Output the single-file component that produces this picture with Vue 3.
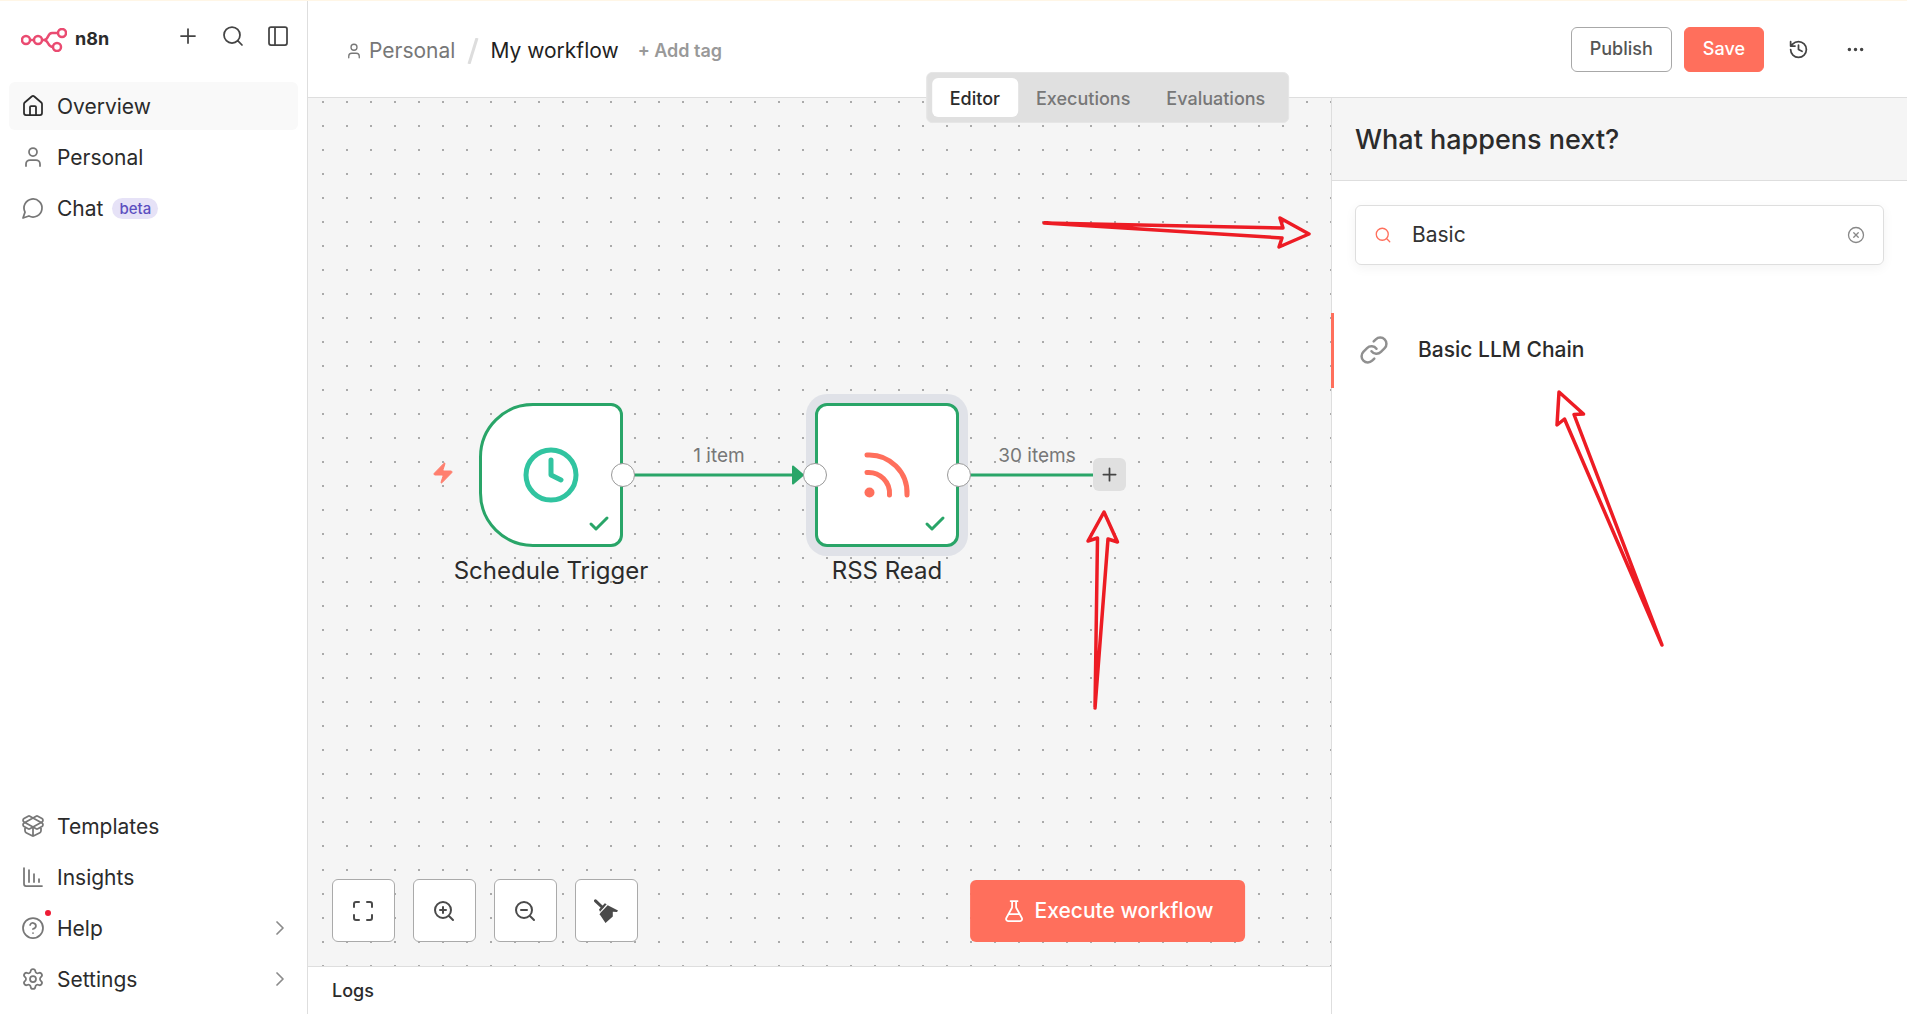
<template>
  <div class="app">
    <aside class="sidebar">
      <div class="brand-row">
        <a class="brand" href="#">
          <svg class="brand-logo" viewBox="0 0 46 24" aria-hidden="true">
            <circle cx="5" cy="12" r="4" />
            <circle cx="17" cy="12" r="4" />
            <circle cx="41" cy="5" r="4" />
            <circle cx="36" cy="19" r="4" />
            <path d="M9 12h4M21 12h2c5 0 3-7 8-7h6M23 12c5 0 3 7 9 7" />
          </svg>
          <span class="brand-name">n8n</span>
        </a>
        <div class="brand-actions">
          <button type="button" class="icon-btn" aria-label="Add"><AppIcon name="plus" /></button>
          <button type="button" class="icon-btn" aria-label="Search"><AppIcon name="search" /></button>
          <button type="button" class="icon-btn" aria-label="Toggle sidebar"><AppIcon name="panel" /></button>
        </div>
      </div>
      <nav class="menu">
        <a v-for="item in topMenu" :key="item.label" href="#" class="menu-item" :class="{ active: item.active }">
          <AppIcon :name="item.icon" class="menu-icon" />
          <span class="menu-label">{{ item.label }}</span>
          <span v-if="item.tag" class="menu-tag">{{ item.tag }}</span>
        </a>
      </nav>
      <nav class="menu menu-bottom">
        <a v-for="item in bottomMenu" :key="item.label" href="#" class="menu-item">
          <AppIcon :name="item.icon" class="menu-icon" />
          <i v-if="item.dot" class="menu-dot"></i>
          <span class="menu-label">{{ item.label }}</span>
          <AppIcon v-if="item.children" name="chevron" class="menu-arrow" />
        </a>
      </nav>
    </aside>

    <main class="main">
      <header class="header">
        <div class="crumbs">
          <a class="crumb" href="#"><AppIcon name="user" class="crumb-icon" />Personal</a>
          <svg class="crumb-slash" viewBox="0 0 12 26" aria-hidden="true"><path d="M10 0L2 26" /></svg>
          <span class="wf-name">My workflow</span>
          <button type="button" class="add-tag">+ Add tag</button>
        </div>
        <div class="header-actions">
          <button type="button" class="btn btn-outline">Publish</button>
          <button type="button" class="btn btn-primary">Save</button>
          <button type="button" class="icon-btn header-icon" aria-label="History"><AppIcon name="history" /></button>
          <button type="button" class="icon-btn header-icon" aria-label="More"><AppIcon name="more" /></button>
        </div>
      </header>

      <div class="tabs">
        <button v-for="tab in tabs" :key="tab" type="button" class="tab" :class="{ active: tab === activeTab }" @click="activeTab = tab">{{ tab }}</button>
      </div>

      <div class="body">
        <section class="workspace">
          <div class="canvas">
            <svg class="edges" aria-hidden="true">
              <path class="edge" d="M326 377H486" />
              <path class="edge" d="M662 377H786" />
              <path class="edge-head" d="M485 368.500L495 377L485 385.500Z" />
            </svg>
            <svg class="bolt" viewBox="0 0 24 24" aria-hidden="true"><path :d="icons.zap" /></svg>
            <div v-for="node in nodes" :key="node.name" class="node" :class="node.type" :style="{ left: node.x + 'px', top: node.y + 'px' }">
              <svg v-if="node.type === 'trigger'" class="node-icon clock" viewBox="0 0 60 60">
                <circle cx="30" cy="30" r="25" />
                <path d="M30 15v15l10 5" />
              </svg>
              <svg v-else class="node-icon rss" viewBox="0 0 60 60">
                <path d="M10 10a38 38 0 0 1 40 40M10 27.500a21 21 0 0 1 22.500 22.500" />
                <circle cx="12.500" cy="47.500" r="5" />
              </svg>
              <AppIcon name="check" class="node-check" />
              <i v-if="node.type === 'action'" class="handle handle-in"></i>
              <i class="handle handle-out"></i>
              <div class="node-name">{{ node.name }}</div>
            </div>
            <span v-for="label in edgeLabels" :key="label.text" class="edge-label" :style="{ left: label.x + 'px', top: label.y + 'px' }">{{ label.text }}</span>
            <button type="button" class="add-node" aria-label="Add node"><AppIcon name="plus" /></button>

            <div class="controls">
              <button type="button" class="control" aria-label="Fit view"><AppIcon name="fit" /></button>
              <button type="button" class="control" aria-label="Zoom in"><AppIcon name="zoomIn" /></button>
              <button type="button" class="control" aria-label="Zoom out"><AppIcon name="zoomOut" /></button>
              <button type="button" class="control" aria-label="Tidy up">
                <svg class="broom" viewBox="0 0 24 24" aria-hidden="true">
                  <path class="broom-handle" d="M1.500 1.800L8 8" />
                  <path d="M5 10.500L10.800 4.300L12.700 5.300L6 12.800Z" />
                  <path d="M6.500 13.800L13.700 6.300L24 11.500L23 13L18.800 12.700L18.800 17.500L11.500 24L6.500 16.500L5.500 15.500Z" />
                </svg>
              </button>
            </div>
          </div>
          <footer class="logs">Logs</footer>
        </section>

        <section class="panel">
          <div class="panel-head">
            <h2>What happens next?</h2>
          </div>
          <label class="search">
            <AppIcon name="search" class="search-icon" />
            <input v-model="keyword" type="text" aria-label="Search nodes" />
            <button type="button" class="icon-btn search-clear" aria-label="Clear" @click="keyword = ''"><AppIcon name="clear" /></button>
          </label>
          <a class="result" href="#">
            <AppIcon name="link" class="result-icon" />
            <span>Basic LLM Chain</span>
          </a>
        </section>

        <button type="button" class="execute"><AppIcon name="flask" />Execute workflow</button>
      </div>
    </main>

    <!-- 标注箭头 -->
    <svg class="marks" aria-hidden="true">
      <path v-for="mark in marks" :key="mark" :d="mark" />
    </svg>
  </div>
</template>

<script setup>
import { h, ref } from 'vue';

const icons = {
  plus: 'M5 12h14M12 5v14',
  search: 'M3 11a8 8 0 1 0 16 0a8 8 0 1 0-16 0M21 21l-4.300-4.300',
  panel: 'M5 3h14a2 2 0 0 1 2 2v14a2 2 0 0 1-2 2H5a2 2 0 0 1-2-2V5a2 2 0 0 1 2-2zM9 3v18',
  home: 'M15 21v-8a1 1 0 0 0-1-1h-4a1 1 0 0 0-1 1v8M3 10a2 2 0 0 1 .709-1.528l7-5.999a2 2 0 0 1 2.582 0l7 5.999A2 2 0 0 1 21 10v9a2 2 0 0 1-2 2H5a2 2 0 0 1-2-2z',
  user: 'M19 21v-2a4 4 0 0 0-4-4H9a4 4 0 0 0-4 4v2M8 7a4 4 0 1 0 8 0a4 4 0 1 0-8 0',
  chat: 'M7.900 20A9 9 0 1 0 4 16.100L2 22Z',
  box: 'M12 22v-9M15.170 2.210a1.670 1.670 0 0 1 1.630 0L21 4.570a1.930 1.930 0 0 1 0 3.360L8.820 14.790a1.655 1.655 0 0 1-1.640 0L3 12.430a1.930 1.930 0 0 1 0-3.360zM20 13v3.870a2.060 2.060 0 0 1-1.110 1.830l-6 3.080a1.930 1.930 0 0 1-1.780 0l-6-3.080A2.060 2.060 0 0 1 4 16.870V13M21 12.430a1.930 1.930 0 0 0 0-3.360L8.830 2.200a1.640 1.640 0 0 0-1.630 0L3 4.570a1.930 1.930 0 0 0 0 3.360l12.180 6.860a1.636 1.636 0 0 0 1.630 0z',
  chart: 'M13 17V9M18 17v-3M3 3v16a2 2 0 0 0 2 2h16M8 17V5',
  help: 'M2 12a10 10 0 1 0 20 0a10 10 0 1 0-20 0M9.090 9a3 3 0 0 1 5.830 1c0 2-3 3-3 3M12 17h.01',
  settings: 'M9.671 4.136a2.340 2.340 0 0 1 4.659 0 2.340 2.340 0 0 0 3.319 1.915 2.340 2.340 0 0 1 2.330 4.033 2.340 2.340 0 0 0 0 3.831 2.340 2.340 0 0 1-2.330 4.033 2.340 2.340 0 0 0-3.319 1.915 2.340 2.340 0 0 1-4.659 0 2.340 2.340 0 0 0-3.320-1.915 2.340 2.340 0 0 1-2.330-4.033 2.340 2.340 0 0 0 0-3.831A2.340 2.340 0 0 1 6.350 6.051a2.340 2.340 0 0 0 3.319-1.915M9 12a3 3 0 1 0 6 0a3 3 0 1 0-6 0',
  chevron: 'M9 18l6-6-6-6',
  history: 'M3 12a9 9 0 1 0 9-9 9.750 9.750 0 0 0-6.740 2.740L3 8M3 3v5h5M12 7v5l4 2',
  more: 'M4 12a1 1 0 1 0 2 0a1 1 0 1 0-2 0M11 12a1 1 0 1 0 2 0a1 1 0 1 0-2 0M18 12a1 1 0 1 0 2 0a1 1 0 1 0-2 0',
  check: 'M20 6L9 17l-5-5',
  fit: 'M8 3H5a2 2 0 0 0-2 2v3M21 8V5a2 2 0 0 0-2-2h-3M3 16v3a2 2 0 0 0 2 2h3M16 21h3a2 2 0 0 0 2-2v-3',
  zoomIn: 'M3 11a8 8 0 1 0 16 0a8 8 0 1 0-16 0M21 21l-4.300-4.300M11 8v6M8 11h6',
  zoomOut: 'M3 11a8 8 0 1 0 16 0a8 8 0 1 0-16 0M21 21l-4.300-4.300M8 11h6',
  clear: 'M2 12a10 10 0 1 0 20 0a10 10 0 1 0-20 0M15 9l-6 6M9 9l6 6',
  link: 'M10 13a5 5 0 0 0 7.540.540l3-3a5 5 0 0 0-7.070-7.070l-1.720 1.710M14 11a5 5 0 0 0-7.540-.540l-3 3a5 5 0 0 0 7.070 7.070l1.710-1.710',
  flask: 'M14 2v6a2 2 0 0 0 .245.960l5.510 10.080A2 2 0 0 1 18 22H6a2 2 0 0 1-1.755-2.960l5.510-10.080A2 2 0 0 0 10 8V2M6.453 15h11.094M8.500 2h7',
  zap: 'M4 14a1 1 0 0 1-.780-1.630l9.900-10.200a.5.5 0 0 1 .860.460l-1.920 6.020A1 1 0 0 0 13 10h7a1 1 0 0 1 .780 1.630l-9.900 10.200a.5.5 0 0 1-.860-.460l1.920-6.020A1 1 0 0 0 11 14z'
};

const AppIcon = (props) => h('svg', { class: 'icon', viewBox: '0 0 24 24', 'aria-hidden': 'true' }, [h('path', { d: icons[props.name] })]);
AppIcon.props = ['name'];

const topMenu = [
  { label: 'Overview', icon: 'home', active: true },
  { label: 'Personal', icon: 'user' },
  { label: 'Chat', icon: 'chat', tag: 'beta' }
];
const bottomMenu = [
  { label: 'Templates', icon: 'box' },
  { label: 'Insights', icon: 'chart' },
  { label: 'Help', icon: 'help', dot: true, children: true },
  { label: 'Settings', icon: 'settings', children: true }
];

const tabs = ['Editor', 'Executions', 'Evaluations'];
const activeTab = ref('Editor');
const keyword = ref('Basic');

const nodes = [
  { name: 'Schedule Trigger', type: 'trigger', x: 171, y: 305 },
  { name: 'RSS Read', type: 'action', x: 507, y: 305 }
];
const edgeLabels = [
  { text: '1 item', x: 411, y: 358 },
  { text: '30 items', x: 729, y: 358 }
];

const marks = [
  'M1044 223L1283 228L1280 218L1309 234L1279 247L1282 238Z',
  'M1095 708L1097.500 538L1088 541L1104 512L1117.500 542L1108 539Z',
  'M1662 645L1564.500 419L1557 425L1559 392L1583.500 414L1574 414.500Z'
];
</script>

<style>
body {
  margin: 0;
  background: #fff;
}
</style>

<style scoped>
.app {
  position: relative;
  display: flex;
  box-sizing: border-box;
  height: 100vh;
  min-height: 720px;
  border-top: 1px solid #fff6e6;
  font-family: Inter, "Liberation Sans", sans-serif;
  font-size: 21px;
  line-height: 28px;
  color: #2b2b2b;
  background: #fff;
  overflow: hidden;
}

button {
  font: inherit;
  color: inherit;
  cursor: pointer;
}

a {
  color: inherit;
  text-decoration: none;
}

.icon {
  flex: none;
  width: 24px;
  height: 24px;
  fill: none;
  stroke: currentColor;
  stroke-width: 1.75;
  stroke-linecap: round;
  stroke-linejoin: round;
}

.icon-btn {
  display: flex;
  padding: 0;
  border: 0;
  background: none;
  color: #444;
}

/* 侧边栏 */
.sidebar {
  flex: none;
  display: flex;
  flex-direction: column;
  box-sizing: border-box;
  width: 308px;
  padding: 23px 9px 11px;
  border-right: 1px solid #dedede;
}

.brand-row {
  display: flex;
  justify-content: space-between;
  align-items: flex-start;
  height: 58px;
  padding: 0 8px 0 12px;
}

.brand {
  display: flex;
  align-items: center;
  gap: 8px;
  padding-top: 2px;
  font-size: 18px;
  font-weight: 700;
}

.brand-name {
  padding-bottom: 2px;
  line-height: 26px;
}

.brand-logo {
  width: 46px;
  height: 24px;
  fill: none;
  stroke: #ea4b71;
  stroke-width: 2.5;
}

.brand-actions {
  display: flex;
  gap: 21px;
}

.menu {
  display: flex;
  flex-direction: column;
  gap: 3px;
}

.menu-bottom {
  margin-top: auto;
}

.menu-item {
  position: relative;
  display: flex;
  align-items: center;
  gap: 12px;
  height: 48px;
  padding: 0 6px 0 12px;
  border-radius: 6px;
}

.menu-item.active {
  background: #f9f9f9;
}

.menu-icon {
  color: #777;
}

.active .menu-icon {
  color: #2b2b2b;
}

.menu-label {
  padding-top: 2px;
}

.menu-tag {
  margin-left: -3px;
  padding: 0 7px;
  border-radius: 11px;
  background: #e6e2f7;
  color: #5c4fc0;
  font-size: 15px;
  font-weight: 500;
  line-height: 21px;
}

.menu-dot {
  position: absolute;
  left: 36px;
  top: 6px;
  width: 6px;
  height: 6px;
  border-radius: 50%;
  background: #ee1c35;
}

.menu-arrow {
  margin-left: auto;
  color: #8c8c8c;
}

/* 顶部 */
.main {
  position: relative;
  flex: 1;
  min-width: 0;
  display: flex;
  flex-direction: column;
}

.header {
  flex: none;
  display: flex;
  align-items: center;
  justify-content: space-between;
  box-sizing: border-box;
  height: 97px;
  padding: 0 29px 0 37px;
  border-bottom: 1px solid #dedede;
}

.crumbs {
  display: flex;
  align-items: center;
  padding-top: 3px;
}

.crumb {
  display: flex;
  align-items: center;
  gap: 6px;
  color: #777;
}

.crumb-icon {
  width: 18px;
  height: 18px;
}

.crumb-slash {
  width: 12px;
  height: 26px;
  margin: 0 11px 0 12px;
  fill: none;
  stroke: #ddd;
  stroke-width: 3;
}

.wf-name {
  color: #1f1f1f;
}

.add-tag {
  margin-left: 19px;
  padding: 0;
  border: 0;
  background: none;
  color: #999;
  font-size: 18px;
  font-weight: 600;
}

.header-actions {
  display: flex;
  align-items: center;
  gap: 12px;
}

.btn {
  box-sizing: border-box;
  height: 45px;
  padding: 0 18px;
  border: 1px solid #a8a8a8;
  border-radius: 6px;
  background: #fff;
  color: #555;
  font-size: 18px;
  font-weight: 500;
}

.btn-primary {
  border-color: #ff6f5c;
  background: #ff6f5c;
  color: #fff;
}

.header-icon {
  width: 45px;
  justify-content: center;
}

.header-icon .icon {
  width: 21px;
  height: 21px;
  stroke-width: 2;
}

.tabs {
  position: absolute;
  z-index: 2;
  top: 71px;
  left: 50%;
  display: flex;
  padding: 5px;
  border: 1px solid #e6e6e6;
  border-radius: 6px;
  background: #e0e0e0;
  transform: translateX(-50%);
}

.tab {
  height: 39px;
  padding: 2px 18px 0;
  border: 0;
  border-radius: 6px;
  background: none;
  color: #777;
  font-size: 18px;
  font-weight: 500;
}

.tab.active {
  background: #fff;
  color: #2b2b2b;
}

/* 画布 */
.body {
  position: relative;
  flex: 1;
  min-height: 0;
  display: flex;
}

.workspace {
  flex: 1;
  min-width: 0;
  display: flex;
  flex-direction: column;
}

.canvas {
  position: relative;
  flex: 1;
  display: flex;
  align-items: flex-end;
  padding: 24px;
  overflow: hidden;
  background: #f5f5f5 radial-gradient(circle, #aaa 1px, transparent 1px) 3px -8px / 24px 24px;
}

.edges {
  position: absolute;
  inset: 0;
  width: 100%;
  height: 100%;
}

.edge {
  fill: none;
  stroke: #29a568;
  stroke-width: 3;
}

.edge-head {
  fill: #29a568;
  stroke: #29a568;
  stroke-width: 2;
  stroke-linejoin: round;
}

.bolt {
  position: absolute;
  left: 123px;
  top: 363px;
  width: 24px;
  height: 24px;
  fill: #ff7f6e;
  stroke: #ff7f6e;
  stroke-width: 1;
}

.node {
  position: absolute;
  display: flex;
  align-items: center;
  justify-content: center;
  box-sizing: border-box;
  width: 144px;
  height: 144px;
  border: 3px solid #29a568;
  border-radius: 12px;
  background: #fff;
}

.node.trigger {
  border-radius: 54px 12px 12px 54px;
}

.node.action {
  box-shadow: 0 0 0 9px #e0e2e8;
}

.node-icon {
  width: 60px;
  height: 60px;
  fill: none;
  stroke-width: 5;
  stroke-linecap: round;
  stroke-linejoin: round;
}

.clock {
  stroke: #31c4a0;
}

.rss {
  stroke: #ff6f5c;
}

.rss circle {
  fill: #ff6f5c;
  stroke: none;
}

.node-check {
  position: absolute;
  right: 9px;
  bottom: 8px;
  color: #29a568;
  stroke-width: 3;
}

.handle {
  position: absolute;
  top: 57px;
  box-sizing: border-box;
  width: 24px;
  height: 24px;
  border: 1px solid #999;
  border-radius: 50%;
  background: #fff;
}

.handle-in {
  left: -15px;
}

.handle-out {
  right: -15px;
}

.node-name {
  position: absolute;
  top: 151px;
  left: 50%;
  font-size: 24px;
  font-weight: 400;
  white-space: nowrap;
  transform: translateX(-50%);
}

.edge-label {
  position: absolute;
  color: #777;
  font-size: 19px;
  white-space: nowrap;
  transform: translate(-50%, -50%);
}

.add-node {
  position: absolute;
  left: 785px;
  top: 360px;
  display: flex;
  align-items: center;
  justify-content: center;
  width: 33px;
  height: 33px;
  padding: 0;
  border: 0;
  border-radius: 6px;
  background: #e0e0e0;
  color: #444;
}

.add-node .icon {
  width: 21px;
  height: 21px;
  stroke-width: 2;
}

.controls {
  display: flex;
  gap: 18px;
}

.control {
  display: flex;
  align-items: center;
  justify-content: center;
  width: 63px;
  height: 63px;
  padding: 0 1px 0 0;
  border: 1px solid #aaa;
  border-radius: 6px;
  background: #fff;
  color: #4a4a4a;
}

.control .icon {
  stroke-width: 2;
}

.broom {
  width: 24px;
  height: 24px;
  fill: currentColor;
}

.broom-handle {
  stroke: currentColor;
  stroke-width: 3;
  stroke-linecap: round;
}

.execute {
  position: absolute;
  left: 50%;
  bottom: 72px;
  display: flex;
  align-items: center;
  gap: 9px;
  height: 62px;
  padding: 0 32px;
  border: 0;
  border-radius: 6px;
  background: #ff6f5c;
  color: #fff;
  font-weight: 500;
  white-space: nowrap;
  transform: translateX(-50%);
}

.logs {
  flex: none;
  padding: 10px 24px 9px;
  border-top: 1px solid #dedede;
  font-size: 18px;
  font-weight: 500;
}

/* 节点面板 */
.panel {
  flex: none;
  box-sizing: border-box;
  width: 576px;
  border-left: 1px solid #dedede;
  background: #fff;
}

.panel-head {
  display: flex;
  align-items: center;
  box-sizing: border-box;
  height: 83px;
  padding: 2px 23px 0;
  border-bottom: 1px solid #dedede;
  background: #f5f5f5;
}

.panel-head h2 {
  margin: 0;
  font-size: 27px;
  font-weight: 500;
}

.search {
  display: flex;
  align-items: center;
  box-sizing: border-box;
  height: 60px;
  margin: 24px 23px 48px;
  padding: 0 18px;
  border: 1px solid #dedede;
  border-radius: 6px;
  box-shadow: 0 3px 12px rgba(0, 0, 0, 0.05);
}

.search-icon {
  width: 18px;
  height: 18px;
  color: #ff6f5c;
}

.search input {
  flex: 1;
  min-width: 0;
  margin: 0 20px;
  padding: 0;
  border: 0;
  outline: 0;
  background: none;
  color: #333;
  font: inherit;
}

.search-clear .icon {
  width: 18px;
  height: 18px;
  color: #888;
}

.result {
  display: flex;
  align-items: center;
  gap: 29px;
  box-sizing: border-box;
  height: 75px;
  margin-left: -1px;
  padding: 0 24px 2px 25px;
  border-left: 3px solid #ff6f5c;
  font-weight: 500;
}

.result-icon {
  width: 30px;
  height: 30px;
  color: #909090;
  stroke-width: 2;
}

/* 标注 */
.marks {
  position: absolute;
  z-index: 3;
  inset: -1px 0 0;
  width: 100%;
  height: 100%;
  fill: none;
  stroke: #ed1c24;
  stroke-width: 3.5;
  stroke-linejoin: round;
  pointer-events: none;
}
</style>
